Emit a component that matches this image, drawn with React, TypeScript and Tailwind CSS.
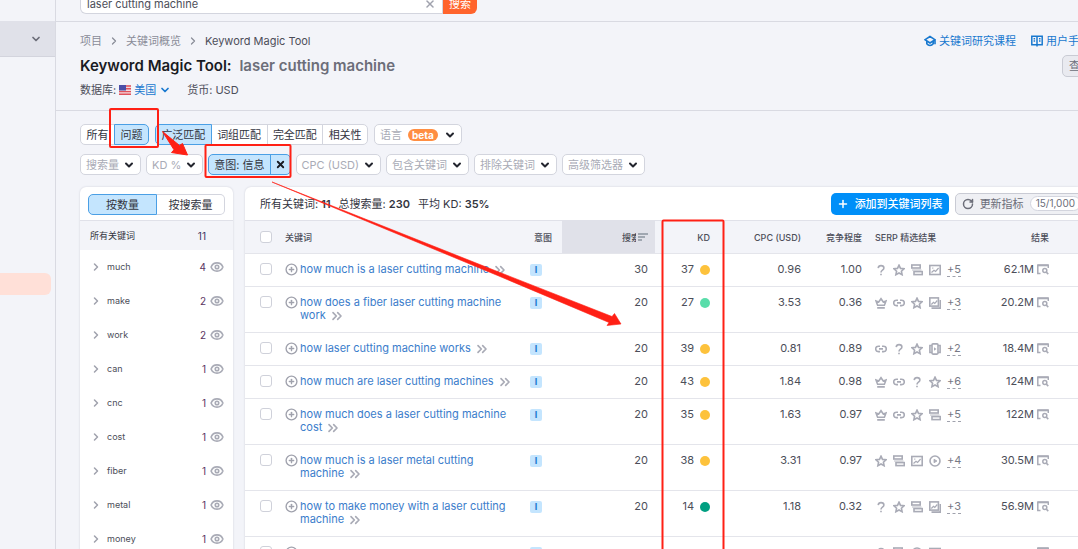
import type { ReactNode } from "react";
import { ChevronDown, ChevronRight, ChevronsRight, CirclePlus, Eye, Plus, RotateCw, X } from "lucide-react";
import clsx from "clsx";

type SerpIcon = "question" | "star" | "sitelinks" | "image" | "crown" | "link" | "images" | "carousel" | "play";

type Keyword = {
    text: string;
    volume: string;
    kd: string;
    dot: string;
    cpc: string;
    competition: string;
    serp: SerpIcon[];
    more: string;
    results: string;
};

const KEYWORDS: Keyword[] = [
    { text: "how much is a laser cutting machine", volume: "30", kd: "37", dot: "bg-[#fdc23c]", cpc: "0.96", competition: "1.00", serp: ["question", "star", "sitelinks", "image"], more: "+5", results: "62.1M" },
    { text: "how does a fiber laser cutting machine work", volume: "20", kd: "27", dot: "bg-[#59ddaa]", cpc: "3.53", competition: "0.36", serp: ["crown", "link", "star", "images"], more: "+3", results: "20.2M" },
    { text: "how laser cutting machine works", volume: "20", kd: "39", dot: "bg-[#fdc23c]", cpc: "0.81", competition: "0.89", serp: ["link", "question", "star", "carousel"], more: "+2", results: "18.4M" },
    { text: "how much are laser cutting machines", volume: "20", kd: "43", dot: "bg-[#fdc23c]", cpc: "1.84", competition: "0.98", serp: ["crown", "link", "question", "star"], more: "+6", results: "124M" },
    { text: "how much does a laser cutting machine cost", volume: "20", kd: "35", dot: "bg-[#fdc23c]", cpc: "1.63", competition: "0.97", serp: ["crown", "link", "star", "sitelinks"], more: "+5", results: "122M" },
    { text: "how much is a laser metal cutting machine", volume: "20", kd: "38", dot: "bg-[#fdc23c]", cpc: "3.31", competition: "0.97", serp: ["star", "sitelinks", "image", "play"], more: "+4", results: "30.5M" },
    { text: "how to make money with a laser cutting machine", volume: "20", kd: "14", dot: "bg-[#009f81]", cpc: "1.18", competition: "0.32", serp: ["question", "star", "sitelinks", "images"], more: "+3", results: "56.9M" },
    { text: "", volume: "", kd: "", dot: "", cpc: "", competition: "", serp: ["question", "sitelinks", "play", "image"], more: "", results: "" },
];

const GROUPS = [
    { name: "much", count: 4 },
    { name: "make", count: 2 },
    { name: "work", count: 2 },
    { name: "can", count: 1 },
    { name: "cnc", count: 1 },
    { name: "cost", count: 1 },
    { name: "fiber", count: 1 },
    { name: "metal", count: 1 },
    { name: "money", count: 1 },
];

const SERP_SHAPES: Record<SerpIcon, ReactNode> = {
    question: <path d="M3.2 4.2C3.4 2.4 4.6 1.6 6 1.6c1.7 0 2.9 1 2.9 2.5C8.9 6.2 6 6.2 6 8.4M6 9.8v1.4" />,
    star: <path d="M6 1.2l1.5 3.2 3.5.4-2.6 2.4.7 3.5L6 9l-3.1 1.7.7-3.5L1 4.8l3.5-.4z" />,
    sitelinks: (
        <>
            <rect x="0.8" y="1" width="8.4" height="3" />
            <rect x="3" y="7.6" width="8.3" height="3" />
            <path d="M1 6h9.5" strokeWidth="0.8" />
        </>
    ),
    image: (
        <>
            <rect x="0.8" y="1.5" width="10.4" height="9" />
            <path d="M2.5 8.5l2.5-2.3 1.6 1.3L9.6 4M3.3 4.2h1" strokeWidth="1.2" />
        </>
    ),
    crown: <path d="M2.6 8.3L1 4l2.7 1L6 1.7 8.3 5 11 4 9.4 8.3zM2.2 10.9h7.6" />,
    link: <path d="M5 3.2H3.4a2.7 2.7 0 000 5.4H5M7 3.2h1.6a2.7 2.7 0 010 5.4H7M4 5.9h4" />,
    images: (
        <>
            <rect x="0.8" y="0.9" width="8.6" height="8.2" />
            <path d="M2.3 7.5l2.2-2.2 1.3 1.2 2.5-3" strokeWidth="1.2" />
            <path d="M2.5 11.1h8.8V3" />
        </>
    ),
    carousel: (
        <>
            <rect x="3" y="0.9" width="6" height="10.2" rx="1" />
            <path d="M3 2.5H.9v7H3M9 2.5h2.1v7H9" />
            <path d="M5 4.3v3.4L7.5 6z" fill="currentColor" stroke="none" />
        </>
    ),
    play: (
        <>
            <circle cx="6" cy="6" r="5" />
            <path d="M5 4.2v3.6L8 6z" fill="currentColor" strokeWidth="0.8" />
        </>
    ),
};

const SerpGlyph = ({ name }: { name: SerpIcon }) => (
    <svg viewBox="0 0 12 12" className="size-3 shrink-0 text-[#a9abb6]" fill="none" stroke="currentColor" strokeWidth="1.6">
        {SERP_SHAPES[name]}
    </svg>
);

const SnapshotIcon = () => (
    <svg viewBox="0 0 12 11" className="h-[11px] w-3 shrink-0 text-[#a9abb6]" fill="none" stroke="currentColor" strokeWidth="1.5">
        <path d="M3.5 9.4H.8V1.2h10.5V4" />
        <path d="M.5 1.3h11" strokeWidth="2" />
        <circle cx="7.8" cy="6.6" r="2" />
        <path d="M9.3 8.1l2 2" />
    </svg>
);

const FlagIcon = () => (
    <svg viewBox="0 0 12 10" className="h-2.5 w-3" aria-hidden="true">
        <rect width="12" height="10" fill="#f3d9dc" />
        <path d="M0 1h12M0 3.8h12M0 6.6h12M0 9.3h12" stroke="#e0525c" strokeWidth="1.4" />
        <rect width="7" height="5.5" fill="#4b4fa8" />
    </svg>
);

const Filter = ({ label, badge }: { label: string; badge?: string }) => (
    <button
        type="button"
        className="flex h-[21px] items-center gap-1 rounded-[5px] border border-[#d3d5de] bg-white px-[5px] text-[#a9abb6]"
    >
        {label}
        {badge && (
            <span className="mx-0.5 rounded-full bg-[#ff8e42] px-1 text-[10px] leading-3 font-bold text-white">{badge}</span>
        )}
        <ChevronDown className="size-3 text-[#23252e]" strokeWidth={4} />
    </button>
);

const SELECTED = "z-10 border-[#4a9fe5] bg-[#c4e5fe]";

const Segments = ({ items, active, className }: { items: string[]; active: string; className: string }) => (
    <div className={clsx("flex", className)}>
        {items.map((item) => (
            <button
                key={item}
                type="button"
                className={clsx(
                    "-ml-px h-[21px] flex-auto border px-1 first:ml-0 first:rounded-l-[5px] last:rounded-r-[5px]",
                    item === active ? SELECTED : "border-[#d3d5de] bg-white"
                )}
            >
                {item}
            </button>
        ))}
    </div>
);

const Checkbox = ({ label }: { label: string }) => (
    <input
        type="checkbox"
        aria-label={label}
        className="block size-3 appearance-none rounded-[3px] border border-[#cfd1da] bg-white"
    />
);

const SideNav = () => (
    <nav className="w-14 shrink-0 border-r border-[#d9dae2] pt-[21px]">
        <button
            type="button"
            aria-label="展开菜单"
            className="flex h-9 w-full items-center justify-end border-b border-[#d3d4dd] bg-[#e0e1e9] pr-[13px]"
        >
            <ChevronDown className="size-3 text-[#6c6e79]" strokeWidth={3.5} />
        </button>
        <a href="#keyword-magic" aria-label="Keyword Magic Tool" className="mt-[216px] mr-1 block h-[22px] rounded-r-md bg-[#ffe0d8]" />
    </nav>
);

const PageHeader = () => (
    <header className="border-b border-[#d9dae2] pt-[11px] pb-[11px] pl-6">
        <div className="flex h-4 items-center">
            <nav className="flex items-center gap-1.5 text-[#8a8c98]">
                <a href="#projects">项目</a>
                <ChevronRight className="size-3" strokeWidth={2.5} />
                <a href="#overview">关键词概览</a>
                <ChevronRight className="size-3" strokeWidth={2.5} />
                <span className="text-[#4c4e59]">Keyword Magic Tool</span>
            </nav>
            <div className="-mr-3 ml-auto flex gap-[15px] text-[#1878cf]">
                <a href="#course" className="flex items-center gap-[3px]">
                    <svg viewBox="0 0 12 12" className="size-3" fill="none" stroke="currentColor" strokeWidth="1.6">
                        <path d="M6 1.5L1 4.7 6 8l5-3.3zM2.8 6v2.7C4.5 11 7.5 11 9.2 8.7V6M11 4.7v4.5" />
                    </svg>
                    关键词研究课程
                </a>
                <a href="#manual" className="flex items-center gap-[3px]">
                    <svg viewBox="0 0 12 12" className="size-3" fill="none" stroke="currentColor" strokeWidth="1.5">
                        <path d="M.8 1.3h10.4v8.4H.8zM6 1.3v10.2M2.6 3.8h1.5M2.6 6h1.5M8 3.8h1.5M8 6h1.5" />
                    </svg>
                    用户手册
                </a>
            </div>
        </div>
        <div className="mt-1.5 flex h-[22px] items-center">
            <h1 className="text-[15px] font-semibold text-[#191b23]">
                Keyword Magic Tool: <span className="ml-1 text-[#6c6e79]">laser cutting machine</span>
            </h1>
            <button
                type="button"
                className="-mr-16 ml-auto h-[22px] rounded-[5px] border border-[#c9cbd4] bg-[#e9eaf0] px-1.5 text-[#6c6e79]"
            >
                查看搜索历史
            </button>
        </div>
        <div className="mt-1 flex h-[18px] items-center text-[#4c4e59]">
            数据库:
            <button type="button" className="ml-[3px] flex items-center gap-[3px] text-[#1878cf]">
                <FlagIcon />
                美国
                <ChevronDown className="size-3" strokeWidth={3.5} />
            </button>
            <span className="ml-4">货币: USD</span>
        </div>
    </header>
);

const Filters = () => (
    <div className="flex flex-col gap-[9px] text-[#33353f]">
        <div className="flex gap-1.5">
            <Segments items={["所有", "问题"]} active="问题" className="w-[69px]" />
            <Segments items={["广泛匹配", "词组匹配", "完全匹配", "相关性"]} active="广泛匹配" className="w-[213px]" />
            <Filter label="语言" badge="beta" />
        </div>
        <div className="flex gap-[5px]">
            <Filter label="搜索量" />
            <Filter label="KD %" />
            <div className="flex h-[21px] rounded-[5px] border border-[#4a9fe5] bg-[#c4e5fe]">
                <button type="button" className="px-[5px]">意图: 信息</button>
                <button type="button" aria-label="清除意图" className="border-l border-[#4a9fe5] px-1">
                    <X className="size-[11px] text-[#191b23]" strokeWidth={4} />
                </button>
            </div>
            <Filter label="CPC (USD)" />
            <Filter label="包含关键词" />
            <Filter label="排除关键词" />
            <Filter label="高级筛选器" />
        </div>
    </div>
);

const GroupList = () => (
    <aside className="w-[153px] shrink-0 rounded-t-md bg-white shadow-[0_0_2px_#c9cbd6]">
        <div className="flex h-[34px] border-b border-[#e0e1e9] px-2 pt-[7px]">
            <button type="button" className={clsx("h-[21px] flex-1 rounded-l-[5px] border", SELECTED)}>按数量</button>
            <button type="button" className="h-[21px] flex-1 rounded-r-[5px] border border-l-0 border-[#d3d5de]">按搜索量</button>
        </div>
        <div className="flex h-[29px] items-center bg-[#f3f4f9] pr-[27px] pl-2.5 text-[9px] text-[#33353f]">
            所有关键词
            <span className="ml-auto text-[10px] text-[#3d3561]">11</span>
        </div>
        <ul className="text-[9px] text-[#4c4e59]">
            {GROUPS.map((group) => (
                <li key={group.name} className="flex h-[34px] items-center pr-[9px] pl-2.5">
                    <ChevronRight className="size-3 text-[#a0a2ad]" strokeWidth={3} />
                    <span className="ml-[5px]">{group.name}</span>
                    <span className="ml-auto text-[10px] text-[#5a3561]">{group.count}</span>
                    <Eye className="ml-1 size-3.5 text-[#a9abb6]" strokeWidth={2.8} />
                </li>
            ))}
        </ul>
    </aside>
);

const KeywordRow = ({ row }: { row: Keyword }) => (
    <tr className="align-top *:border-t *:border-[#e4e5eb] *:pt-[9px] *:pb-2.5">
        <td className="pl-[15px]">
            <Checkbox label={row.text} />
        </td>
        <td>
            <div className="flex gap-0.5">
                <CirclePlus className="size-[13px] shrink-0 text-[#a0a2ad]" strokeWidth={2.5} />
                <a href="#keyword" className="max-w-[220px] text-[#3b7dcb]">
                    {row.text}
                    {row.text && (
                        <ChevronsRight className="-my-2 ml-[3px] inline size-4 text-[#a9abb6]" strokeWidth={2.5} />
                    )}
                </a>
            </div>
        </td>
        <td>
            <span className="mt-px block size-3 rounded-[2px] bg-[#c4e5fe] text-center text-[9px] leading-3 font-bold text-[#1878cf]">
                I
            </span>
        </td>
        <td className="pr-[7px] text-right">{row.volume}</td>
        <td className="pr-[5px]">
            <span className="flex items-center justify-end gap-1.5">
                {row.kd}
                <span className={clsx("size-2.5 rounded-full", row.dot)} />
            </span>
        </td>
        <td className="pr-2 text-right">{row.cpc}</td>
        <td className="pr-2 text-right">{row.competition}</td>
        <td className="pl-[5px]">
            <span className="flex h-[13px] items-center gap-1.5">
                {row.serp.map((name) => (
                    <SerpGlyph key={name} name={name} />
                ))}
                {row.more && (
                    <span className="border-b border-dashed border-[#a0a2ad] text-[#777985]">{row.more}</span>
                )}
            </span>
        </td>
        <td className="pr-1">
            <span className="flex h-[13px] items-center justify-end gap-[3px]">
                {row.results}
                <SnapshotIcon />
            </span>
        </td>
        <td />
    </tr>
);

const KeywordTable = () => (
    <section className="min-w-0 flex-1 overflow-hidden rounded-tl-md bg-white shadow-[0_0_2px_#c9cbd6]">
        <div className="flex h-[33px] items-center gap-2 pl-[15px] whitespace-nowrap text-[#33353f]">
            <span>所有关键词: <b className="font-semibold">11</b></span>
            <span>总搜索量: <b className="font-semibold">230</b></span>
            <span>平均 KD: <b className="font-semibold">35%</b></span>
            <div className="-mr-2.5 ml-auto flex shrink-0 gap-1.5">
                <button
                    type="button"
                    className="flex h-[22px] items-center gap-1.5 rounded-[5px] bg-[#008ff8] px-1.5 font-medium text-white"
                >
                    <Plus className="size-3" strokeWidth={3} />
                    添加到关键词列表
                </button>
                <button
                    type="button"
                    className="flex h-[22px] items-center gap-1.5 rounded-[5px] border border-[#c9cbd4] bg-[#eff0f4] px-1.5 text-[#6c6e79]"
                >
                    <RotateCw className="size-3" strokeWidth={3} />
                    更新指标
                    <span className="rounded-full border border-[#d3d5de] bg-white px-[5px] text-[10px] leading-[13px]">15/1,000</span>
                </button>
            </div>
        </div>
        <table className="w-full table-fixed border-separate border-spacing-0 text-left leading-[13px] text-[#4c4e59]">
            <colgroup>
                <col className="w-10" />
                <col className="w-[245px]" />
                <col className="w-8" />
                <col className="w-[93px]" />
                <col className="w-[60px]" />
                <col className="w-[94px]" />
                <col className="w-[61px]" />
                <col className="w-[95px]" />
                <col className="w-[88px]" />
                <col />
            </colgroup>
            <thead className="text-[9px]">
                <tr className="h-[33px] bg-[#f3f4f9] *:border-t *:border-[#e0e1e9] *:font-medium">
                    <th className="pl-[15px]">
                        <Checkbox label="全选" />
                    </th>
                    <th>关键词</th>
                    <th className="whitespace-nowrap"><span className="ml-1">意图</span></th>
                    <th className="bg-[#e0e1e9] pr-[7px]">
                        <span className="flex items-center justify-end gap-0.5">
                            <span className="w-3.5 overflow-hidden whitespace-nowrap">搜索量</span>
                            <svg viewBox="0 0 10 8" className="h-2 w-2.5 text-[#8a949e]" stroke="currentColor" strokeWidth="1.6">
                                <path d="M0 1h10M0 4h7M0 7h4" />
                            </svg>
                        </span>
                    </th>
                    <th className="pr-[5px] text-right">KD</th>
                    <th className="pr-2 text-right">CPC (USD)</th>
                    <th className="pr-2 text-right">竞争程度</th>
                    <th className="pl-[5px]">SERP 精选结果</th>
                    <th className="pr-1 text-right">结果</th>
                    <th />
                </tr>
            </thead>
            <tbody>
                {KEYWORDS.map((row) => (
                    <KeywordRow key={row.results} row={row} />
                ))}
            </tbody>
        </table>
    </section>
);

// Red marks drawn over the page: three frames and two arrows
const Annotations = () => (
    <svg className="pointer-events-none absolute top-0 left-0 z-20 h-full w-full" fill="none" stroke="#ff2015" strokeWidth="2">
        <rect x="110" y="109" width="48" height="38" rx="1" />
        <rect x="205.5" y="145" width="85" height="32" rx="1" />
        <rect x="662.5" y="220.5" width="61" height="400" rx="1" />
        <path d="M162.5 131.5L179.5 145.5 182.5 143.5 187.5 155 171.5 152.5 174 149.8z" fill="#ff2015" strokeWidth="1" />
        <path d="M272 182L500 272.5 612 316.5 614.5 313.5 621 324 607 325.5 609 322.5 500 276.5z" fill="#ff2015" strokeWidth="0.6" />
    </svg>
);

export default function App() {
    return (
        <div className="relative flex h-screen overflow-hidden bg-[#f3f4f9] font-[Inter,'Noto_Sans_CJK_SC',sans-serif] text-[11px] leading-4 text-[#33353f]">
            <SideNav />
            <main className="min-w-0 flex-1 overflow-hidden">
                <form className="flex h-[22px] items-end border-b border-[#d9dae2] pb-[7px] pl-6">
                    <div className="flex h-5 w-[363px] shrink-0 items-center rounded-bl-md border border-t-0 border-[#d3d5de] bg-white pr-1.5 pl-1.5">
                        <input
                            type="text"
                            aria-label="关键词"
                            defaultValue="laser cutting machine"
                            className="min-w-0 flex-1 text-[11px] text-[#4c4e59] outline-none"
                        />
                        <button type="button" aria-label="清除">
                            <X className="size-3 text-[#a0a2ad]" strokeWidth={3} />
                        </button>
                    </div>
                    <button type="submit" className="h-5 rounded-br-md bg-[#ff642d] px-1.5 text-white">搜索</button>
                </form>
                <PageHeader />
                <div className="pt-[13px] pl-6">
                    <Filters />
                    <div className="mt-3 flex gap-3">
                        <GroupList />
                        <KeywordTable />
                    </div>
                </div>
            </main>
            <Annotations />
        </div>
    );
}
